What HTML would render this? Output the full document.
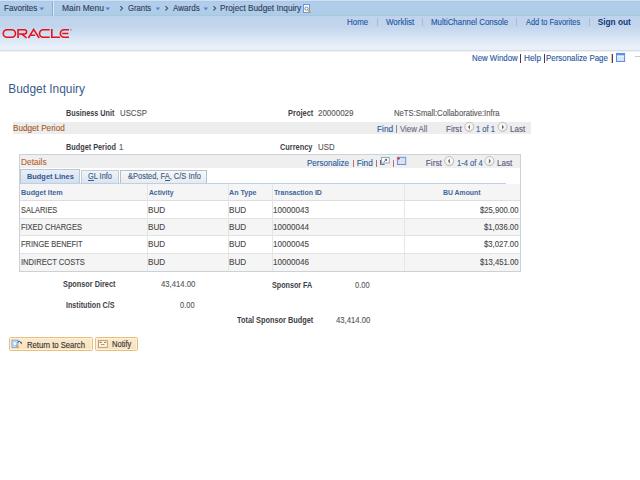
<!DOCTYPE html>
<html><head><meta charset="utf-8"><style>
html,body{margin:0;padding:0;width:640px;height:480px;overflow:hidden;background:#fff;}
body{position:relative;font-family:"Liberation Sans",sans-serif;}
.t{position:absolute;line-height:14px;white-space:nowrap;transform-origin:0 0;-webkit-text-stroke:0.12px currentColor;}
.t.b{-webkit-text-stroke:0;}
.a{position:absolute;}
</style></head><body>
<!-- top menu bar -->
<div class="a" style="left:0;top:0;width:640px;height:1px;background:#d0e2f1"></div>
<div class="a" style="left:0;top:1px;width:640px;height:14px;background:linear-gradient(#adc6e2 0px,#b1cdeb 1.5px,#b0cdea 8px,#accde5 14px)"></div>
<div class="a" style="left:0;top:15px;width:640px;height:1px;background:#a8c5e1"></div>
<div class="a" style="left:52px;top:1px;width:1px;height:15px;background:#8eacd6"></div>
<div class="a" style="left:53px;top:1px;width:1px;height:15px;background:#dde9f6"></div>
<!-- header gradient -->
<div class="a" style="left:0;top:16px;width:640px;height:34px;background:linear-gradient(#bfd4ec 0px,#c1d5ed 10px,#c7d9ef 13px,#cfdff2 18px,#d8e5f4 22px,#e0eaf7 26px,#e8eff9 31px,#ebf1f9 34px)"></div>
<div class="a" style="left:0;top:50px;width:640px;height:1px;background:#d8dde3"></div>
<div class="a" style="left:0;top:51px;width:640px;height:1px;background:#eff1f4"></div>
<!-- menubar triangles and chevrons -->
<svg class="a" style="left:0;top:0" width="320" height="16">
<g fill="#5b82c2">
<path d="M39.3,7.6 L44.3,7.6 L41.8,10.2 Z"/>
<path d="M105.3,7.6 L110.3,7.6 L107.8,10.2 Z"/>
<path d="M155.6,7.6 L160.2,7.6 L157.9,10.2 Z"/>
<path d="M203.3,7.6 L208.3,7.6 L205.8,10.2 Z"/>
</g>
<g stroke="#3e5476" stroke-width="1.05" fill="none">
<path d="M120.3,6.1 L122.6,8.3 L120.3,10.5"/>
<path d="M165.4,6.1 L167.7,8.3 L165.4,10.5"/>
<path d="M213.4,6.1 L215.7,8.3 L213.4,10.5"/>
</g>
<rect x="303.5" y="4.5" width="6" height="8" fill="#fafcff" stroke="#6f98d8" stroke-width="1"/>
<circle cx="306.5" cy="8.6" r="1.6" fill="none" stroke="#5a6f90" stroke-width="0.8"/>
<path d="M308,10.2 L310.6,12.8" stroke="#e0a020" stroke-width="1.3"/>
</svg>
<!-- header link separators -->
<div class="a" style="left:377px;top:18px;width:1px;height:8px;background:#a8bcd6"></div>
<div class="a" style="left:422px;top:18px;width:1px;height:8px;background:#a8bcd6"></div>
<div class="a" style="left:516px;top:18px;width:1px;height:8px;background:#a8bcd6"></div>
<div class="a" style="left:589px;top:18px;width:1px;height:8px;background:#a8bcd6"></div>
<!-- ORACLE logo -->
<svg class="a" style="left:0;top:24px" width="75" height="18" viewBox="0 24 75 18">
<g fill="none" stroke="#e8101a" stroke-width="1.6">
<rect x="3.25" y="29.75" width="12.25" height="7.5" rx="3.75"/>
<path d="M18.05,38 V29.75 H24.5 A2.1,2.1 0 0 1 24.5,33.95 H19 M21.6,33.95 L26.6,38"/>
<path d="M28.4,38 L33.6,29.4 L39.2,38 M31,35.2 H35"/>
<path d="M49.75,29.75 H43.3 A3.75,3.75 0 0 0 43.3,37.25 H49.75"/>
<path d="M51.8,29 V37.25 H60"/>
<path d="M69,29.75 H64.1 A3.75,3.75 0 0 0 64.1,37.25 H69 M62.2,33.5 H68.4"/>
</g>
<circle cx="71" cy="29.8" r="0.6" fill="#e3141b"/>
</svg>
<!-- page links separators + icon -->
<div class="a" style="left:520px;top:54px;width:1.2px;height:9px;background:#5b2e4a"></div>
<div class="a" style="left:544px;top:54px;width:1.2px;height:9px;background:#5b2e4a"></div>
<div class="a" style="left:611px;top:54px;width:1px;height:9px;background:#f0c070"></div><div class="a" style="left:612px;top:54px;width:1px;height:9px;background:#3a3f8a"></div>
<svg class="a" style="left:610px;top:48px" width="20" height="18" viewBox="610 48 20 18">
<rect x="616.5" y="53.4" width="8.1" height="8.1" fill="#cfe0f6" stroke="#5a8ee0" stroke-width="1"/>
<rect x="617" y="53.9" width="7.1" height="1.6" fill="#5a8ee0"/>
<rect x="617" y="55.6" width="7.1" height="1" fill="#ffffff"/>
<path d="M619.3,57 V61 M621.7,57 V61 M617,59 H624" stroke="#e8f0fb" stroke-width="0.6"/>
</svg>
<div class="a" style="left:635px;top:56px;width:5px;height:1px;background:#c8c8c8"></div>
<!-- budget period bar -->
<div class="a" style="left:13px;top:122px;width:518px;height:12px;background:#ededed"></div>
<div class="a" style="left:396px;top:125px;width:1px;height:8px;background:#8a8aa0"></div>
<svg class="a" style="left:460px;top:120px" width="50" height="14">
<defs><radialGradient id="cg" cx="0.45" cy="0.4" r="0.6"><stop offset="0" stop-color="#ffffff"/><stop offset="0.7" stop-color="#f2f2f2"/><stop offset="1" stop-color="#d8d8d8"/></radialGradient></defs>
<circle cx="9.3" cy="6.9" r="4.5" fill="url(#cg)" stroke="#b4b4b4" stroke-width="0.8"/>
<path d="M10,4.4 L8,6.9 L10,9.4 Z" fill="#6a6a6a"/>
<circle cx="42.6" cy="6.9" r="4.5" fill="url(#cg)" stroke="#b4b4b4" stroke-width="0.8"/>
<path d="M42,4.4 L44,6.9 L42,9.4 Z" fill="#6a6a6a"/>
</svg>
<!-- details box -->
<div class="a" style="left:19px;top:154px;width:500px;height:116px;border:1px solid #c9d2d8;background:#fff"></div>
<div class="a" style="left:20px;top:155px;width:500px;height:13px;background:#efefef"></div>
<div class="a" style="left:353px;top:160px;width:1px;height:7px;background:#c07060"></div>
<div class="a" style="left:376px;top:160px;width:1px;height:7px;background:#c07060"></div>
<div class="a" style="left:393px;top:160px;width:1px;height:7px;background:#c07060"></div>
<svg class="a" style="left:370px;top:150px" width="45" height="20" viewBox="370 150 45 20">
<rect x="381.5" y="157.4" width="7.8" height="5.6" fill="#fff" stroke="#8a9cc0" stroke-width="0.9"/>
<path d="M380.5,160 V164.4 H384.6" stroke="#4a5470" stroke-width="0.9" fill="none"/>
<path d="M383.8,162 L386.4,159.4 M384.9,159.3 H386.6 V161.1" stroke="#3a4252" stroke-width="0.8" fill="none"/>
<rect x="397.4" y="157.3" width="8.3" height="7.2" fill="#d6dbe4" stroke="#5f94e6" stroke-width="1"/>
<path d="M398,160 H405.2 M398,162.4 H405.2 M400.6,158 V164.2 M403,158 V164.2" stroke="#eceef2" stroke-width="0.5"/>
<circle cx="398.7" cy="158.6" r="1.15" fill="#e81818"/>
</svg>
<svg class="a" style="left:440px;top:154px" width="60" height="14">
<circle cx="9.2" cy="7.1" r="4.6" fill="url(#cg)" stroke="#b4b4b4" stroke-width="0.8"/>
<path d="M9.9,4.5 L7.9,7.1 L9.9,9.7 Z" fill="#6a6a6a"/>
<circle cx="49.5" cy="7.1" r="4.6" fill="url(#cg)" stroke="#b4b4b4" stroke-width="0.8"/>
<path d="M48.9,4.5 L50.9,7.1 L48.9,9.7 Z" fill="#6a6a6a"/>
</svg>
<!-- tabs -->
<div class="a" style="left:20px;top:169px;width:58px;height:13px;border:1px solid #b8c8dc;border-bottom:none;background:linear-gradient(#e9eff7,#d3dfee)"></div>
<div class="a" style="left:81px;top:170px;width:36px;height:12px;border:1px solid #c0ccd8;border-bottom:none;background:linear-gradient(#f1f4f9,#dbe4ef)"></div>
<div class="a" style="left:120px;top:170px;width:85px;height:12px;border:1px solid #b4c0d0;border-bottom:none;background:linear-gradient(#f8f8f8,#e8eaee)"></div>
<div class="a" style="left:20px;top:183px;width:486px;height:1px;background:#bcd0e8"></div>
<!-- grid -->
<div class="a" style="left:20px;top:184px;width:500px;height:16px;background:#f5f5f5"></div>
<div class="a" style="left:20px;top:200px;width:500px;height:1px;background:#dedede"></div>
<div class="a" style="left:20px;top:218px;width:500px;height:17px;background:#f5f5f5"></div>
<div class="a" style="left:20px;top:218px;width:500px;height:1px;background:#e2e2e2"></div>
<div class="a" style="left:20px;top:235px;width:500px;height:1px;background:#e2e2e2"></div>
<div class="a" style="left:20px;top:253px;width:500px;height:18px;background:#f5f5f5"></div>
<div class="a" style="left:20px;top:253px;width:500px;height:1px;background:#e2e2e2"></div>
<div class="a" style="left:147px;top:184px;width:1px;height:87px;background:#e6e6e6"></div>
<div class="a" style="left:228px;top:184px;width:1px;height:87px;background:#e6e6e6"></div>
<div class="a" style="left:272px;top:184px;width:1px;height:87px;background:#e6e6e6"></div>
<div class="a" style="left:404px;top:184px;width:1px;height:87px;background:#e6e6e6"></div>
<!-- buttons -->
<div class="a" style="left:9px;top:337px;width:82px;height:12px;border:1px solid #e6bf80;background:linear-gradient(#fbe9cc,#f9e2bc);box-shadow:inset 0 0 0 1px #fdf1dc;border-radius:1.5px"></div>
<div class="a" style="left:95px;top:337px;width:41px;height:12px;border:1px solid #e6bf80;background:linear-gradient(#fbe9cc,#f9e2bc);box-shadow:inset 0 0 0 1px #fdf1dc;border-radius:1.5px"></div>
<svg class="a" style="left:8px;top:335px" width="18" height="18" viewBox="8 335 18 18">
<rect x="11.9" y="340.1" width="6" height="7.5" fill="#c4dcfa" stroke="#6d9fe6" stroke-width="0.8"/>
<circle cx="14.8" cy="343.6" r="2" fill="#f4f8ff" stroke="#a8b8d0" stroke-width="0.7"/>
<path d="M16.2,345.2 L18.4,348.2" stroke="#e0a030" stroke-width="1.2"/>
<path d="M17.6,342.3 Q19.2,340.2 20.8,342.4" stroke="#234a8a" stroke-width="1" fill="none"/>
<path d="M19.8,342.6 L21.8,344.2 L21.7,341.8 Z" fill="#234a8a"/>
</svg>
<svg class="a" style="left:94px;top:335px" width="18" height="18" viewBox="94 335 18 18">
<rect x="98.5" y="340.6" width="8.8" height="6.7" fill="#fbfaf2" stroke="#c49060" stroke-width="0.9"/>
<path d="M99.6,342.4 H101.6" stroke="#7a4010" stroke-width="0.9"/>
<path d="M104,342.4 H106.2" stroke="#30a030" stroke-width="0.9"/>
<path d="M100.8,344.6 H104.6" stroke="#b07850" stroke-width="0.9"/>
</svg>
<!-- accelerator underlines -->
<div class="a" style="left:88px;top:180px;width:5.5px;height:1px;background:#3a5a8a"></div>
<div class="a" style="left:165px;top:180px;width:4.5px;height:1px;background:#3a5a8a"></div>

<div id="i0" class="t" style="left:4.03px;top:2px;font-size:8.25px;color:#323d58;transform:scaleX(0.9788);">Favorites</div>
<div id="i1" class="t" style="left:61.77px;top:2px;font-size:8.25px;color:#323d58;transform:scaleX(1.0256);">Main Menu</div>
<div id="i2" class="t" style="left:127.59px;top:2px;font-size:8.25px;color:#323d58;transform:scaleX(0.936);">Grants</div>
<div id="i3" class="t" style="left:172.6px;top:2px;font-size:8.25px;color:#323d58;transform:scaleX(0.9815);">Awards</div>
<div id="i4" class="t" style="left:220.0px;top:2px;font-size:8.25px;color:#323d58;">Project Budget Inquiry</div>
<div id="i5" class="t" style="left:347.17px;top:16px;font-size:8.25px;color:#1f55a2;transform:scaleX(0.9643);">Home</div>
<div id="i6" class="t" style="left:386.0px;top:16px;font-size:8.25px;color:#1f55a2;transform:scaleX(0.9655);">Worklist</div>
<div id="i7" class="t" style="left:430.67px;top:16px;font-size:8.25px;color:#1f55a2;transform:scaleX(0.957);">MultiChannel Console</div>
<div id="i8" class="t" style="left:525.51px;top:16px;font-size:8.25px;color:#1f55a2;transform:scaleX(0.9017);">Add to Favorites</div>
<div id="i9" class="t b" style="left:597.72px;top:16px;font-size:8.25px;font-weight:bold;color:#0f3678;">Sign out</div>
<div id="i10" class="t" style="left:472.41px;top:52px;font-size:8.25px;color:#2757a0;transform:scaleX(0.9489);">New Window</div>
<div id="i11" class="t" style="left:524.0px;top:52px;font-size:8.25px;color:#2757a0;">Help</div>
<div id="i12" class="t" style="left:546.43px;top:52px;font-size:8.25px;color:#2757a0;transform:scaleX(0.9571);">Personalize Page</div>
<div id="i13" class="t b" style="left:8.34px;top:82px;font-size:11.9px;color:#3a5a8c;">Budget Inquiry</div>
<div id="i14" class="t b" style="left:66.04px;top:107px;font-size:8.25px;font-weight:bold;color:#3e3e46;transform:scaleX(0.8818);">Business Unit</div>
<div id="i15" class="t" style="left:119.76px;top:107px;font-size:8.25px;color:#585858;transform:scaleX(0.9444);">USCSP</div>
<div id="i16" class="t b" style="left:288.26px;top:107px;font-size:8.25px;font-weight:bold;color:#3e3e46;transform:scaleX(0.9054);">Project</div>
<div id="i17" class="t" style="left:317.98px;top:107px;font-size:8.25px;color:#585858;transform:scaleX(0.9667);">20000029</div>
<div id="i18" class="t" style="left:393.79px;top:107px;font-size:8.25px;color:#585858;transform:scaleX(0.9312);">NeTS:Small:Collaborative:Infra</div>
<div id="i19" class="t" style="left:13.48px;top:122px;font-size:8.25px;color:#a85a2c;transform:scaleX(0.9902);">Budget Period</div>
<div id="i20" class="t" style="left:377.35px;top:123px;font-size:8.25px;color:#2a5ca0;transform:scaleX(1.0067);">Find</div>
<div id="i21" class="t" style="left:399.67px;top:123px;font-size:8.25px;color:#6a6a80;transform:scaleX(0.95);">View All</div>
<div id="i22" class="t" style="left:445.67px;top:123px;font-size:8.25px;color:#5e5a7a;transform:scaleX(0.9733);">First</div>
<div id="i23" class="t" style="left:476.02px;top:123px;font-size:8.25px;color:#3a5f9a;transform:scaleX(0.9211);">1 of 1</div>
<div id="i24" class="t" style="left:510.48px;top:123px;font-size:8.25px;color:#5e5a7a;transform:scaleX(0.9733);">Last</div>
<div id="i25" class="t b" style="left:65.52px;top:141px;font-size:8.25px;font-weight:bold;color:#3e3e46;transform:scaleX(0.8839);">Budget Period</div>
<div id="i26" class="t" style="left:119.36px;top:141px;font-size:8.25px;color:#585858;transform:scaleX(0.93);">1</div>
<div id="i27" class="t b" style="left:280.21px;top:141px;font-size:8.25px;font-weight:bold;color:#3e3e46;transform:scaleX(0.8958);">Currency</div>
<div id="i28" class="t" style="left:317.77px;top:141px;font-size:8.25px;color:#585858;transform:scaleX(0.95);">USD</div>
<div id="i29" class="t" style="left:20.68px;top:156px;font-size:8.25px;color:#b8652e;transform:scaleX(1.0167);">Details</div>
<div id="i30" class="t" style="left:307.43px;top:157px;font-size:8.25px;color:#2a5ca0;transform:scaleX(0.9714);">Personalize</div>
<div id="i31" class="t" style="left:356.74px;top:157px;font-size:8.25px;color:#2a5ca0;">Find</div>
<div id="i32" class="t" style="left:425.78px;top:157px;font-size:8.25px;color:#5e5a7a;">First</div>
<div id="i33" class="t" style="left:457.37px;top:157px;font-size:8.25px;color:#3a5f9a;transform:scaleX(0.9148);">1-4 of 4</div>
<div id="i34" class="t" style="left:496.83px;top:157px;font-size:8.25px;color:#5e5a7a;transform:scaleX(0.98);">Last</div>
<div id="i35" class="t b" style="left:26.87px;top:170px;font-size:8.0px;font-weight:bold;color:#34568a;transform:scaleX(0.924);">Budget Lines</div>
<div id="i36" class="t" style="left:88.49px;top:170px;font-size:8.25px;color:#3a5a8a;transform:scaleX(0.8944);">GL Info</div>
<div id="i37" class="t" style="left:127.69px;top:170px;font-size:8.25px;color:#3a5a8a;transform:scaleX(0.9081);">&amp;Posted, FA, C/S Info</div>
<div id="i38" class="t b" style="left:21.38px;top:186px;font-size:7.5px;font-weight:bold;color:#40659a;transform:scaleX(0.9628);">Budget Item</div>
<div id="i39" class="t b" style="left:149.24px;top:186px;font-size:7.5px;font-weight:bold;color:#40659a;transform:scaleX(0.9);">Activity</div>
<div id="i40" class="t b" style="left:229.44px;top:186px;font-size:7.5px;font-weight:bold;color:#40659a;transform:scaleX(0.9483);">An Type</div>
<div id="i41" class="t b" style="left:274.11px;top:186px;font-size:7.5px;font-weight:bold;color:#40659a;transform:scaleX(0.926);">Transaction ID</div>
<div id="i42" class="t b" style="left:442.83px;top:186px;font-size:7.5px;font-weight:bold;color:#40659a;transform:scaleX(0.9171);">BU Amount</div>
<div id="i43" class="t" style="left:21.13px;top:204px;font-size:8.25px;color:#4a4a4a;transform:scaleX(0.9);">SALARIES</div>
<div id="i44" class="t" style="left:147.85px;top:204px;font-size:8.25px;color:#4a4a4a;transform:scaleX(0.9875);">BUD</div>
<div id="i45" class="t" style="left:228.8px;top:204px;font-size:8.25px;color:#4a4a4a;transform:scaleX(0.9875);">BUD</div>
<div id="i46" class="t" style="left:272.66px;top:204px;font-size:8.25px;color:#4a4a4a;transform:scaleX(0.9814);">10000043</div>
<div id="i47" class="t" style="left:480.2px;top:204px;font-size:8.25px;color:#4a4a4a;transform:scaleX(0.9341);">$25,900.00</div>
<div id="i48" class="t" style="left:20.81px;top:221px;font-size:8.25px;color:#4a4a4a;transform:scaleX(0.903);">FIXED CHARGES</div>
<div id="i49" class="t" style="left:147.85px;top:221px;font-size:8.25px;color:#4a4a4a;transform:scaleX(0.9875);">BUD</div>
<div id="i50" class="t" style="left:228.8px;top:221px;font-size:8.25px;color:#4a4a4a;transform:scaleX(0.9875);">BUD</div>
<div id="i51" class="t" style="left:272.66px;top:221px;font-size:8.25px;color:#4a4a4a;transform:scaleX(0.9814);">10000044</div>
<div id="i52" class="t" style="left:484.19px;top:221px;font-size:8.25px;color:#4a4a4a;transform:scaleX(0.9389);">$1,036.00</div>
<div id="i53" class="t" style="left:20.66px;top:238px;font-size:8.25px;color:#4a4a4a;transform:scaleX(0.903);">FRINGE BENEFIT</div>
<div id="i54" class="t" style="left:147.85px;top:238px;font-size:8.25px;color:#4a4a4a;transform:scaleX(0.9875);">BUD</div>
<div id="i55" class="t" style="left:228.8px;top:238px;font-size:8.25px;color:#4a4a4a;transform:scaleX(0.9875);">BUD</div>
<div id="i56" class="t" style="left:272.66px;top:238px;font-size:8.25px;color:#4a4a4a;transform:scaleX(0.9814);">10000045</div>
<div id="i57" class="t" style="left:484.19px;top:238px;font-size:8.25px;color:#4a4a4a;transform:scaleX(0.9389);">$3,027.00</div>
<div id="i58" class="t" style="left:20.56px;top:256px;font-size:8.25px;color:#4a4a4a;transform:scaleX(0.9191);">INDIRECT COSTS</div>
<div id="i59" class="t" style="left:147.85px;top:256px;font-size:8.25px;color:#4a4a4a;transform:scaleX(0.9875);">BUD</div>
<div id="i60" class="t" style="left:228.8px;top:256px;font-size:8.25px;color:#4a4a4a;transform:scaleX(0.9875);">BUD</div>
<div id="i61" class="t" style="left:272.66px;top:256px;font-size:8.25px;color:#4a4a4a;transform:scaleX(0.9814);">10000046</div>
<div id="i62" class="t" style="left:480.2px;top:256px;font-size:8.25px;color:#4a4a4a;transform:scaleX(0.9341);">$13,451.00</div>
<div id="i63" class="t b" style="left:63.03px;top:278px;font-size:8.25px;font-weight:bold;color:#3e3e46;transform:scaleX(0.8864);">Sponsor Direct</div>
<div id="i64" class="t" style="left:161.46px;top:278px;font-size:8.25px;color:#585858;transform:scaleX(0.9375);">43,414.00</div>
<div id="i65" class="t b" style="left:66.16px;top:299px;font-size:8.25px;font-weight:bold;color:#3e3e46;transform:scaleX(0.8679);">Institution C/S</div>
<div id="i66" class="t" style="left:180.02px;top:299px;font-size:8.25px;color:#585858;transform:scaleX(0.9062);">0.00</div>
<div id="i67" class="t b" style="left:272.05px;top:279px;font-size:8.25px;font-weight:bold;color:#3e3e46;transform:scaleX(0.8696);">Sponsor FA</div>
<div id="i68" class="t" style="left:355.02px;top:279px;font-size:8.25px;color:#585858;transform:scaleX(0.9062);">0.00</div>
<div id="i69" class="t b" style="left:236.78px;top:314px;font-size:8.25px;font-weight:bold;color:#3e3e46;transform:scaleX(0.8912);">Total Sponsor Budget</div>
<div id="i70" class="t" style="left:336.46px;top:314px;font-size:8.25px;color:#585858;transform:scaleX(0.9375);">43,414.00</div>
<div id="i71" class="t" style="left:27.39px;top:339px;font-size:8.25px;color:#333;transform:scaleX(0.9295);">Return to Search</div>
<div id="i72" class="t" style="left:112.22px;top:338px;font-size:8.25px;color:#333;transform:scaleX(0.915);">Notify</div>
</body></html>
